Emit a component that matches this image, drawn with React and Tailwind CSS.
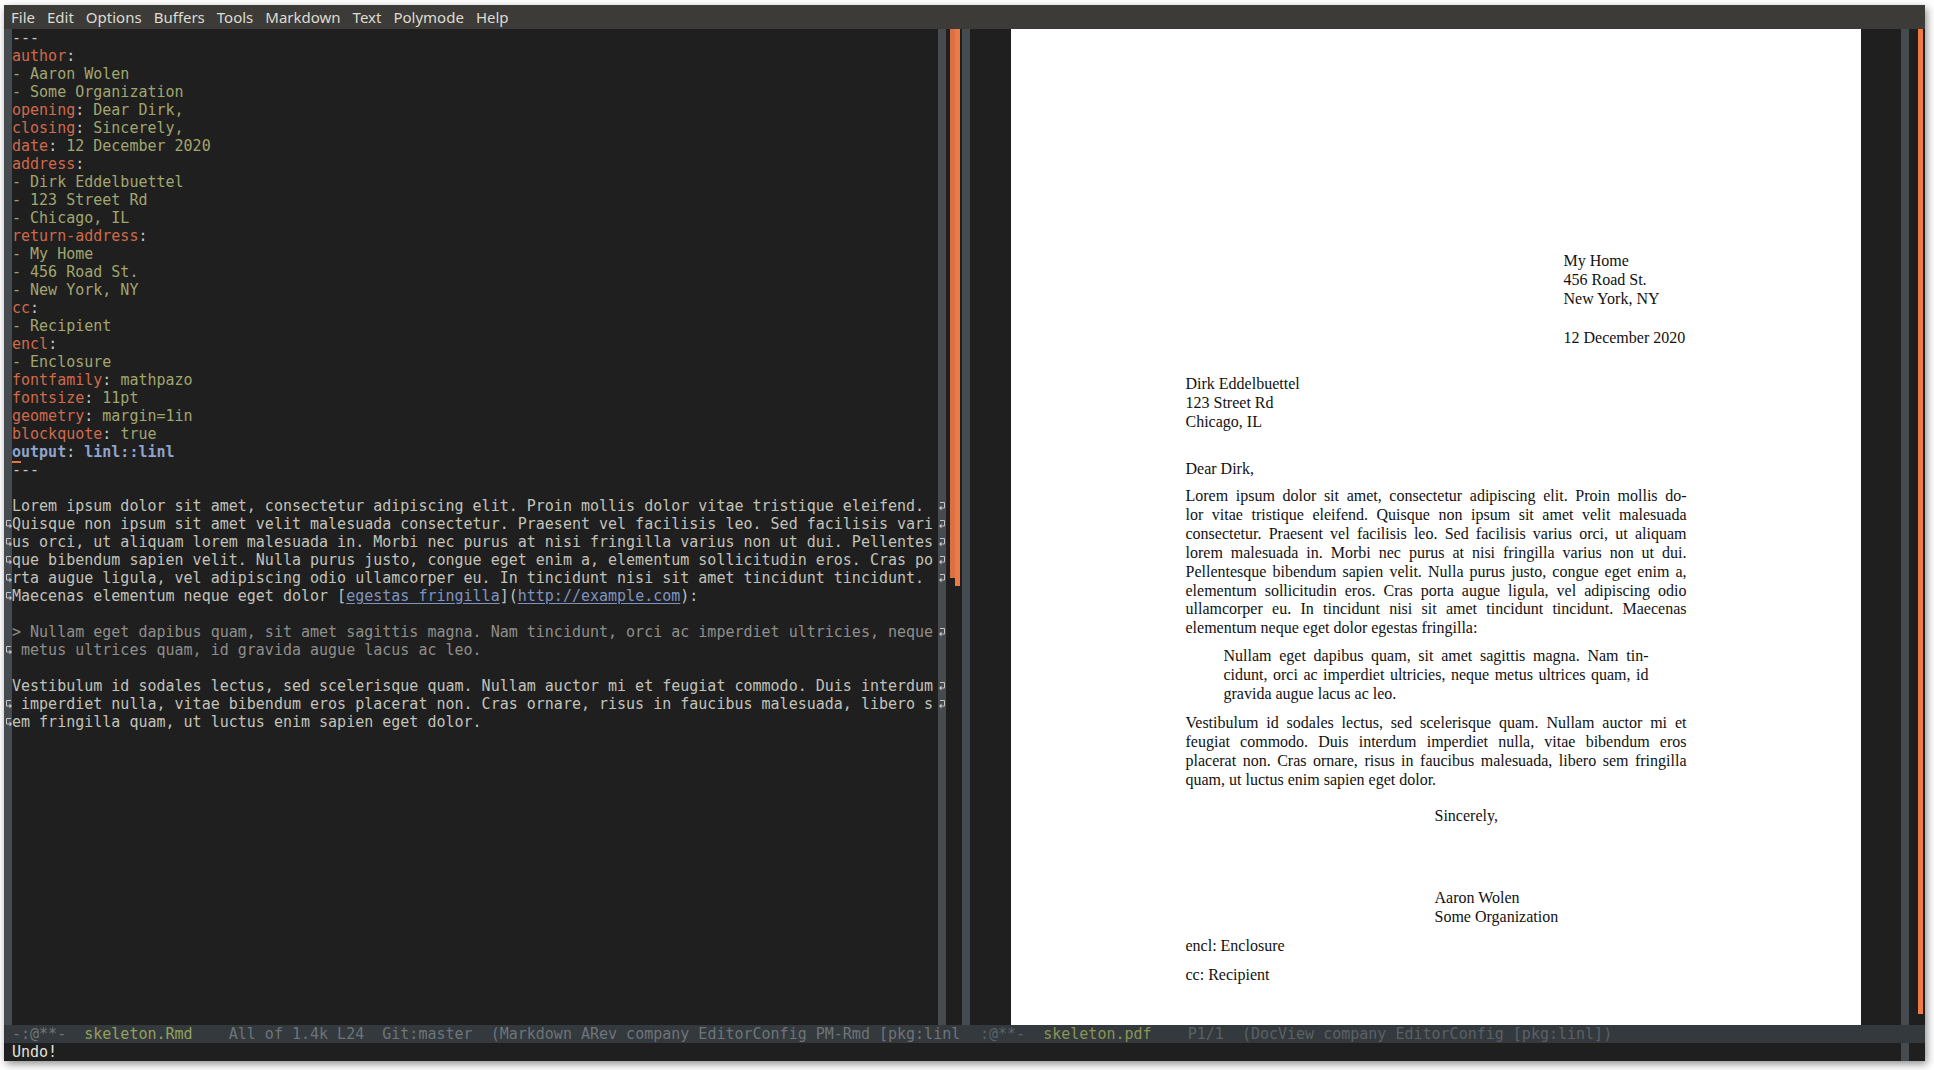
import React from 'react';

const MONO = "font-['DejaVu_Sans_Mono',monospace]";
const SERIF = "font-['Liberation_Serif','Times_New_Roman',serif]";

const KEY = 'text-[#cf6a4c]';
const VAL = 'text-[#a1a66f]';
const PUN = 'text-[#c8c8c2]';
const TXT = 'text-[#c2c2ba]';
const QUO = 'text-[#8e8e8b]';
const LNK = 'text-[#7f93bf] underline underline-offset-2';
const BLU = 'text-[#8ea4cc] font-bold';

const kv = (k, v) => (v ? [[k, KEY], [': ', PUN], [v, VAL]] : [[k, KEY], [':', PUN]]);

const LINES = [
  [['---', PUN]],
  kv('author'),
  [['- Aaron Wolen', VAL]],
  [['- Some Organization', VAL]],
  kv('opening', 'Dear Dirk,'),
  kv('closing', 'Sincerely,'),
  kv('date', '12 December 2020'),
  kv('address'),
  [['- Dirk Eddelbuettel', VAL]],
  [['- 123 Street Rd', VAL]],
  [['- Chicago, IL', VAL]],
  kv('return-address'),
  [['- My Home', VAL]],
  [['- 456 Road St.', VAL]],
  [['- New York, NY', VAL]],
  kv('cc'),
  [['- Recipient', VAL]],
  kv('encl'),
  [['- Enclosure', VAL]],
  kv('fontfamily', 'mathpazo'),
  kv('fontsize', '11pt'),
  kv('geometry', 'margin=1in'),
  kv('blockquote', 'true'),
  'output',
  [['---', PUN]],
  [],
  [['Lorem ipsum dolor sit amet, consectetur adipiscing elit. Proin mollis dolor vitae tristique eleifend.', TXT]],
  [['Quisque non ipsum sit amet velit malesuada consectetur. Praesent vel facilisis leo. Sed facilisis vari', TXT]],
  [['us orci, ut aliquam lorem malesuada in. Morbi nec purus at nisi fringilla varius non ut dui. Pellentes', TXT]],
  [['que bibendum sapien velit. Nulla purus justo, congue eget enim a, elementum sollicitudin eros. Cras po', TXT]],
  [['rta augue ligula, vel adipiscing odio ullamcorper eu. In tincidunt nisi sit amet tincidunt tincidunt.', TXT]],
  [
    ['Maecenas elementum neque eget dolor [', TXT],
    ['egestas fringilla', LNK],
    ['](', TXT],
    ['http://example.com', LNK],
    ['):', TXT],
  ],
  [],
  [['> Nullam eget dapibus quam, sit amet sagittis magna. Nam tincidunt, orci ac imperdiet ultricies, neque', QUO]],
  [[' metus ultrices quam, id gravida augue lacus ac leo.', QUO]],
  [],
  [['Vestibulum id sodales lectus, sed scelerisque quam. Nullam auctor mi et feugiat commodo. Duis interdum', TXT]],
  [[' imperdiet nulla, vitae bibendum eros placerat non. Cras ornare, risus in faucibus malesuada, libero s', TXT]],
  [['em fringilla quam, ut luctus enim sapien eget dolor.', TXT]],
];

const WRAP_RIGHT = [26, 27, 28, 29, 30, 33, 36, 37];
const WRAP_LEFT = [27, 28, 29, 30, 31, 34, 37, 38];

function CurlyArrow({ flip }) {
  return (
    <svg width="7" height="9" viewBox="0 0 7 9" className={flip ? '-scale-x-100' : ''}>
      <path d="M1 0.5h4.5v5.5H1.5" fill="none" stroke="#c4c4c4" strokeWidth="1" />
      <path d="M0 6l2.5-2.5v5z" fill="#c4c4c4" />
    </svg>
  );
}

function Fringe({ marks, flip }) {
  return (
    <div className="flex w-[8px] shrink-0 flex-col bg-[#464b50]">
      {LINES.map((_, i) => (
        <div key={i} className="flex h-[18px] items-center justify-center">
          {marks.includes(i) && <CurlyArrow flip={flip} />}
        </div>
      ))}
    </div>
  );
}

function CodeLine({ line }) {
  if (line === 'output') {
    return (
      <div className="h-[18px] whitespace-pre">
        <span className={`${BLU} border-b-2 border-[#e8743f]`}>o</span>
        <span className={BLU}>utput</span>
        <span className={PUN}>: </span>
        <span className={BLU}>linl::linl</span>
      </div>
    );
  }
  return (
    <div className="h-[18px] whitespace-pre">
      {line.map(([t, c], j) => (
        <span key={j} className={c}>
          {t}
        </span>
      ))}
    </div>
  );
}

function MenuBar() {
  const items = ['File', 'Edit', 'Options', 'Buffers', 'Tools', 'Markdown', 'Text', 'Polymode', 'Help'];
  return (
    <div className="flex h-[24px] shrink-0 items-center gap-[12px] bg-[#3c3b37] pl-[7px] font-['Noto_Sans',sans-serif] text-[15px] text-[#dfdbd2]">
      {items.map((m) => (
        <span key={m}>{m}</span>
      ))}
    </div>
  );
}

function Just({ children, last }) {
  return <div className={last ? '' : '[text-align-last:justify] text-justify'}>{children}</div>;
}

function PdfPage() {
  return (
    <div className={`h-full w-[850px] shrink-0 overflow-hidden bg-white pl-[175px] pr-[174px] pt-[222px] ${SERIF} text-[16px] leading-[19px] text-[#111]`}>
      <div className="ml-[378px]">
        <div>My Home</div>
        <div>456 Road St.</div>
        <div>New York, NY</div>
        <div className="mt-[20px]">12 December 2020</div>
      </div>
      <div className="mt-[27px]">
        <div>Dirk Eddelbuettel</div>
        <div>123 Street Rd</div>
        <div>Chicago, IL</div>
      </div>
      <div className="mt-[28px]">Dear Dirk,</div>
      <div className="mt-[9px] leading-[18.9px]">
        <Just>Lorem ipsum dolor sit amet, consectetur adipiscing elit. Proin mollis do-</Just>
        <Just>lor vitae tristique eleifend. Quisque non ipsum sit amet velit malesuada</Just>
        <Just>consectetur. Praesent vel facilisis leo. Sed facilisis varius orci, ut aliquam</Just>
        <Just>lorem malesuada in. Morbi nec purus at nisi fringilla varius non ut dui.</Just>
        <Just>Pellentesque bibendum sapien velit. Nulla purus justo, congue eget enim a,</Just>
        <Just>elementum sollicitudin eros. Cras porta augue ligula, vel adipiscing odio</Just>
        <Just>ullamcorper eu. In tincidunt nisi sit amet tincidunt tincidunt. Maecenas</Just>
        <Just last>elementum neque eget dolor egestas fringilla:</Just>
      </div>
      <div className="mx-[38px] mt-[9px] leading-[18.9px]">
        <Just>Nullam eget dapibus quam, sit amet sagittis magna. Nam tin-</Just>
        <Just>cidunt, orci ac imperdiet ultricies, neque metus ultrices quam, id</Just>
        <Just last>gravida augue lacus ac leo.</Just>
      </div>
      <div className="mt-[10px] leading-[18.9px]">
        <Just>Vestibulum id sodales lectus, sed scelerisque quam. Nullam auctor mi et</Just>
        <Just>feugiat commodo. Duis interdum imperdiet nulla, vitae bibendum eros</Just>
        <Just>placerat non. Cras ornare, risus in faucibus malesuada, libero sem fringilla</Just>
        <Just last>quam, ut luctus enim sapien eget dolor.</Just>
      </div>
      <div className="ml-[249px] mt-[16px]">Sincerely,</div>
      <div className="ml-[249px] mt-[63px]">
        <div>Aaron Wolen</div>
        <div>Some Organization</div>
      </div>
      <div className="mt-[10px]">encl: Enclosure</div>
      <div className="mt-[10px]">cc: Recipient</div>
    </div>
  );
}

export default function App() {
  return (
    <div className="min-h-screen w-full bg-white pl-[4px] pt-[5px]">
      <div className="flex h-[1056px] w-[1921px] flex-col bg-[#1f1f1f] shadow-[2px_3px_8px_rgba(0,0,0,0.45)]">
        <MenuBar />

        {/* windows */}
        <div className="flex min-h-0 flex-1">
          {/* left: skeleton.Rmd */}
          <div className={`flex w-[958px] shrink-0 ${MONO} text-[15px] leading-[18px]`}>
            <Fringe marks={WRAP_LEFT} flip />
            <div className="min-w-0 flex-1 overflow-hidden">
              {LINES.map((l, i) => (
                <CodeLine key={i} line={l} />
              ))}
            </div>
            <Fringe marks={WRAP_RIGHT} />
            <div className="w-[4px] shrink-0" />
            <div className="flex w-[10px] shrink-0">
              <div className="h-[549px] w-[5px] bg-[#dc7044]" />
              <div className="h-[557px] w-[5px] bg-[#f07b42]" />
            </div>
            <div className="w-[2px] shrink-0" />
          </div>

          {/* right: skeleton.pdf */}
          <div className="flex min-w-0 flex-1">
            <div className="w-[8px] shrink-0 bg-[#464b50]" />
            <div className="flex min-w-0 flex-1 justify-center">
              <PdfPage />
            </div>
            <div className="w-[8px] shrink-0 bg-[#464b50]" />
            <div className="w-[9px] shrink-0" />
            <div className="w-[5px] shrink-0">
              <div className="h-[985px] bg-[#f07b42]" />
            </div>
            <div className="w-[2px] shrink-0" />
          </div>
        </div>

        {/* mode lines */}
        <div className={`flex h-[18px] shrink-0 bg-[#33393d] ${MONO} text-[15px] leading-[18px]`}>
          <div className="w-[958px] shrink-0 overflow-hidden whitespace-pre pl-[8px] text-[#6e7479]">
            <span>-:@**-  </span>
            <span className="text-[#95a05a]">skeleton.Rmd</span>
            <span>    All of 1.4k L24  Git:master  (Markdown ARev company EditorConfig PM-Rmd [pkg:linl</span>
          </div>
          <div className="min-w-0 flex-1 overflow-hidden whitespace-pre pl-[18px] text-[#5b6166]">
            <span>:@**-  </span>
            <span className="text-[#8a9455]">skeleton.pdf</span>
            <span>    P1/1  (DocView company EditorConfig [pkg:linl])</span>
          </div>
        </div>

        {/* echo area */}
        <div className={`flex h-[18px] shrink-0 ${MONO} text-[15px] leading-[18px]`}>
          <div className="flex-1 pl-[8px] text-[#e2e2dc]">Undo!</div>
          <div className="w-[8px] shrink-0 bg-[#464b50]" />
          <div className="w-[16px] shrink-0" />
        </div>
      </div>
    </div>
  );
}
